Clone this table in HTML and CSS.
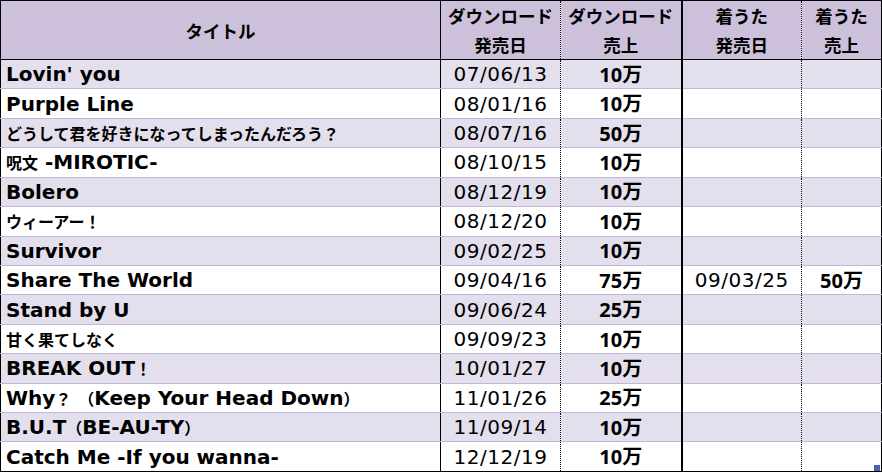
FILE: index.html
```html
<!DOCTYPE html>
<html lang="ja">
<head>
<meta charset="utf-8">
<title>ダウンロード売上</title>
<link rel="stylesheet" href="styles.css">
</head>
<body>
<div class="sheet">
<table class="sales">
  <colgroup>
    <col class="c-title"><col class="c-date"><col class="c-num"><col class="c-date2"><col class="c-num2">
  </colgroup>
  <thead>
    <tr>
      <th class="title">タイトル</th>
      <th class="dl-date">ダウンロード<br>発売日</th>
      <th class="dl-num">ダウンロード<br>売上</th>
      <th class="ch-date">着うた<br>発売日</th>
      <th class="ch-num">着うた<br>売上</th>
    </tr>
  </thead>
  <tbody>
    <tr><td class="title">Lovin' you</td><td class="dl-date">07/06/13</td><td class="dl-num">10<span class="man">万</span></td><td class="ch-date"></td><td class="ch-num"></td></tr>
    <tr><td class="title">Purple Line</td><td class="dl-date">08/01/16</td><td class="dl-num">10<span class="man">万</span></td><td class="ch-date"></td><td class="ch-num"></td></tr>
    <tr><td class="title"><span class="j">どうして君を好きになってしまったんだろう？</span></td><td class="dl-date">08/07/16</td><td class="dl-num">50<span class="man">万</span></td><td class="ch-date"></td><td class="ch-num"></td></tr>
    <tr><td class="title"><span class="j">呪文</span> -MIROTIC-</td><td class="dl-date">08/10/15</td><td class="dl-num">10<span class="man">万</span></td><td class="ch-date"></td><td class="ch-num"></td></tr>
    <tr><td class="title">Bolero</td><td class="dl-date">08/12/19</td><td class="dl-num">10<span class="man">万</span></td><td class="ch-date"></td><td class="ch-num"></td></tr>
    <tr><td class="title"><span class="j">ウィーアー！</span></td><td class="dl-date">08/12/20</td><td class="dl-num">10<span class="man">万</span></td><td class="ch-date"></td><td class="ch-num"></td></tr>
    <tr><td class="title">Survivor</td><td class="dl-date">09/02/25</td><td class="dl-num">10<span class="man">万</span></td><td class="ch-date"></td><td class="ch-num"></td></tr>
    <tr><td class="title">Share The World</td><td class="dl-date">09/04/16</td><td class="dl-num">75<span class="man">万</span></td><td class="ch-date">09/03/25</td><td class="ch-num">50<span class="man">万</span></td></tr>
    <tr><td class="title">Stand by U</td><td class="dl-date">09/06/24</td><td class="dl-num">25<span class="man">万</span></td><td class="ch-date"></td><td class="ch-num"></td></tr>
    <tr><td class="title"><span class="j">甘く果てしなく</span></td><td class="dl-date">09/09/23</td><td class="dl-num">10<span class="man">万</span></td><td class="ch-date"></td><td class="ch-num"></td></tr>
    <tr><td class="title">BREAK OUT<span class="j">！</span></td><td class="dl-date">10/01/27</td><td class="dl-num">10<span class="man">万</span></td><td class="ch-date"></td><td class="ch-num"></td></tr>
    <tr><td class="title">Why<span class="j">？</span> <span class="j">（</span>Keep Your Head Down<span class="j">）</span></td><td class="dl-date">11/01/26</td><td class="dl-num">25<span class="man">万</span></td><td class="ch-date"></td><td class="ch-num"></td></tr>
    <tr><td class="title">B.U.T<span class="j">（</span>BE-AU-TY<span class="j">）</span></td><td class="dl-date">11/09/14</td><td class="dl-num">10<span class="man">万</span></td><td class="ch-date"></td><td class="ch-num"></td></tr>
    <tr><td class="title">Catch Me -If you wanna-</td><td class="dl-date">12/12/19</td><td class="dl-num">10<span class="man">万</span></td><td class="ch-date"></td><td class="ch-num"></td></tr>
  </tbody>
</table>
<span class="handle"></span>
</div>
</body>
</html>
```

FILE: styles.css
```css
html, body {
  margin: 0;
  padding: 0;
  background: #ffffff;
}

.sheet {
  position: relative;
  width: 881px;
  height: 472px;
}

.sales {
  border-collapse: collapse;
  table-layout: fixed;
  width: 881px;
  height: 472px;
  border: 1px solid #000;
  color: #000;
  font-family: "DejaVu Sans", "Noto Sans CJK JP", sans-serif;
}

.c-title { width: 440px; }
.c-date { width: 120px; }
.c-num { width: 121px; }
.c-date2 { width: 120px; }
.c-num2 { width: 80px; }

.sales th,
.sales td {
  padding: 0;
  white-space: nowrap;
  overflow: hidden;
}

.sales thead tr {
  height: 59px;
}

.sales th {
  background: #ccc0da;
  border-bottom: 1px solid #000;
  font-family: "Noto Sans CJK JP", sans-serif;
  font-weight: 700;
  font-size: 17.5px;
  line-height: 29px;
  text-align: center;
  vertical-align: middle;
}

.sales tbody tr {
  height: 28px;
}

.sales tbody tr:nth-child(odd) td {
  background: #e4dfec;
}

.sales td {
  border-bottom: 1px solid #c3b6d6;
  vertical-align: middle;
  line-height: 26px;
}

.sales tbody tr:last-child td {
  border-bottom: 1px solid #000;
}

.sales .title {
  border-right: 1px solid #000;
}
.sales .dl-date {
  border-right: 1px dotted #000;
}
.sales .dl-num {
  border-right: 2px solid #000;
}
.sales .ch-date {
  border-right: 1px dotted #000;
}
.sales .ch-num {
  border-right: 1px solid #000;
}

.sales td.title {
  padding-left: 5px;
  font-weight: 700;
  font-size: 20px;
  text-align: left;
}

.sales td .j {
  font-family: "Noto Sans CJK JP", sans-serif;
  font-size: 16px;
  font-weight: 700;
}

.sales td.dl-date,
.sales td.ch-date {
  font-size: 20px;
  letter-spacing: 0.5px;
  text-align: center;
}

.sales td.dl-num,
.sales td.ch-num {
  font-family: "Noto Sans", sans-serif;
  font-weight: 700;
  font-size: 20px;
  text-align: center;
}

.sales .man {
  font-family: "Noto Sans CJK JP", sans-serif;
  font-size: 20px;
  font-weight: 700;
}

.handle {
  position: absolute;
  right: 1px;
  bottom: 1px;
  width: 6px;
  height: 6px;
  background: #4b5fb4;
}
```
